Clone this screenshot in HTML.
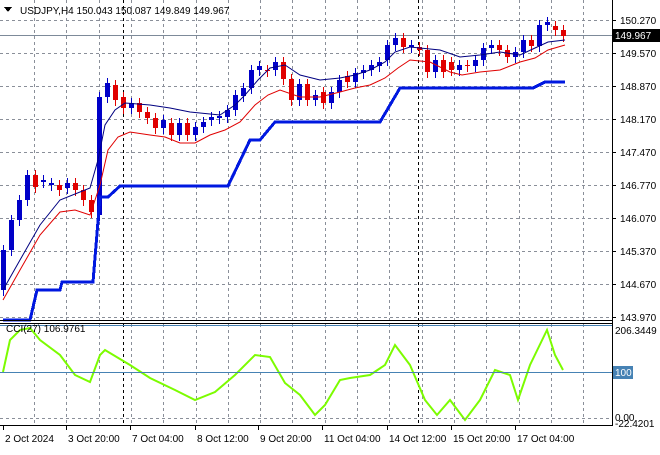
<!DOCTYPE html>
<html><head><meta charset="utf-8"><style>
body{margin:0;background:#fff;width:660px;height:450px;overflow:hidden;font-family:"Liberation Sans",sans-serif}
svg text{font-family:"Liberation Sans",sans-serif;font-size:10px;fill:#000}
</style></head><body>
<svg id="s" width="660" height="450" xmlns="http://www.w3.org/2000/svg" shape-rendering="crispEdges">
<rect width="660" height="450" fill="#fff"/>
<g id="grid" stroke="#8a8f99" stroke-dasharray="3,3" stroke-width="1"></g>
<line x1="123.5" y1="0" x2="123.5" y2="425" stroke="#000" stroke-dasharray="3,3"/>
<line x1="418.5" y1="0" x2="418.5" y2="425" stroke="#000" stroke-dasharray="3,3"/>
<line x1="0" y1="35.5" x2="612" y2="35.5" stroke="#7d8a99"/>
<g id="c"></g>
<polyline fill="none" stroke="#000080" stroke-width="1" shape-rendering="auto" points="3,290 20,260 40,225 60,200 90,188 98,160 105,125 115,110 125,103 150,105 170,108 190,112 220,115 235,105 245,95 258,80 270,68 285,65 300,75 320,80 340,78 355,75 370,70 385,62 395,52 410,47 420,48 440,50 460,57 480,55 500,52 520,55 535,48 548,42 565,40"/>
<polyline fill="none" stroke="#e00000" stroke-width="1" shape-rendering="auto" points="3,300 20,270 40,235 60,212 75,210 90,215 100,185 108,150 118,137 130,132 150,135 165,137 180,143 195,143 210,135 225,130 240,122 255,105 268,95 280,90 300,97 320,97 340,92 355,88 370,85 385,78 398,68 410,60 430,62 450,72 462,75 480,72 500,70 520,62 535,58 548,50 565,45"/>
<polyline fill="none" stroke="#0018e0" stroke-width="3" points="3,320 30,320 37,290 60,290 62,282 93,282 100,197 108,197 120,186 228,186 250,140 260,140 275,122 380,122 400,88 533,88 545,82 565,82"/>
<polyline fill="none" stroke="#7cfc00" stroke-width="2" shape-rendering="auto" points="3,372 10,340 20,330 30,328 40,340 60,355 75,375 90,382 100,355 105,350 130,365 150,378 175,390 195,400 215,392 235,375 255,355 270,357 285,383 300,395 315,415 325,405 340,380 350,378 370,375 385,365 395,345 410,365 425,400 437,415 450,400 465,420 480,400 495,370 510,375 518,400 530,365 547,330 555,355 563,370"/>
<line x1="0" y1="325.5" x2="612" y2="325.5" stroke="#4682b4"/>
<line x1="0" y1="372.5" x2="612" y2="372.5" stroke="#4682b4"/>
<line x1="0" y1="418.5" x2="612" y2="418.5" stroke="#8a8f99" stroke-dasharray="3,3"/>
<line x1="0" y1="320.5" x2="612" y2="320.5" stroke="#000"/>
<line x1="0" y1="323.5" x2="612" y2="323.5" stroke="#000"/>
<line x1="612.5" y1="0" x2="612.5" y2="426" stroke="#000"/>
<line x1="0" y1="425.5" x2="612" y2="425.5" stroke="#000"/>
<g id="ax"></g>
<rect x="613" y="29" width="47" height="13" fill="#000"/>
<text x="615" y="39" style="fill:#fff">149.967</text>
<rect x="613" y="366" width="20" height="13" fill="#4682b4"/>
<text x="615" y="376" style="fill:#fff">100</text>
<text x="615" y="334">206.3449</text>
<text x="615" y="421">0.00</text>
<text x="615" y="427">-22.4201</text>
<path d="M4,7 L12,7 L8,12 Z" fill="#000"/>
<text x="20" y="14">USDJPY,H4  150.043 150.087 149.849 149.967</text>
<text x="6" y="332">CCI(27) 106.9761</text>
<g id="tl"></g>
</svg>
<script>
var ns="http://www.w3.org/2000/svg",s=document;
function el(p,t,a,tx){var e=s.createElementNS(ns,t);for(var k in a)e.setAttribute(k,a[k]);if(tx)e.textContent=tx;s.getElementById(p).appendChild(e);return e;}
var vx=[];for(var x=34;x<612;x+=32.3)vx.push(Math.round(x)+.5);
vx.forEach(function(x){el("grid","line",{x1:x,y1:0,x2:x,y2:320});el("grid","line",{x1:x,y1:324,x2:x,y2:425});});
var pr=["150.270","149.570","148.870","148.170","147.470","146.770","146.070","145.370","144.670","143.970"];
pr.forEach(function(p,i){var y=20+i*33.0;el("grid","line",{x1:0,y1:Math.round(y)+.5,x2:612,y2:Math.round(y)+.5});el("ax","line",{x1:612,y1:Math.round(y)+.5,x2:616,y2:Math.round(y)+.5,stroke:"#000"});el("ax","text",{x:620,y:Math.round(y)+4},p);});
var tl=[["2 Oct 2024",3],["3 Oct 20:00",66],["7 Oct 04:00",130],["8 Oct 12:00",195],["9 Oct 20:00",258],["11 Oct 04:00",322],["14 Oct 12:00",387],["15 Oct 20:00",451],["17 Oct 04:00",515]];
tl.forEach(function(t){el("tl","line",{x1:t[1]+.5,y1:425,x2:t[1]+.5,y2:430,stroke:"#000"});el("tl","text",{x:t[1]+2,y:442},t[0]);});
var c=[[290,250],[250,220],[220,200],[200,175],[175,187],[182,180],[185,183],[185,190],[188,183],[183,190],[190,200],[200,212],[215,97],[97,83],[85,100],[97,108],[108,103],[103,112],[112,118],[118,128],[128,120],[123,135],[135,123],[123,135],[135,127],[127,122],[120,117],[118,116],[117,110],[110,95],[96,88],[88,70],[70,66],[70,71],[70,62],[62,79],[79,100],[100,84],[84,100],[100,95],[92,103],[103,92],[92,80],[76,82],[82,73],[73,70],[70,65],[66,62],[60,45],[45,38],[38,47],[47,45],[47,50],[50,72],[72,60],[60,72],[62,70],[70,65],[65,66],[66,60],[60,48],[48,45],[45,50],[50,57],[57,52],[52,40],[40,46],[46,25],[25,22],[26,30],[30,36]];
c.forEach(function(v,i){var x=3+i*8,o=v[0],cl=v[1],up=cl<o,col=up?"#0000c8":"#e00000";var t=Math.min(o,cl),b=Math.max(o,cl);
el("c","line",{x1:x+.5,y1:t-5,x2:x+.5,y2:b+6,stroke:col});el("c","rect",{x:x-2,y:t,width:5,height:Math.max(1,b-t),fill:col});});
</script>
</body></html>
